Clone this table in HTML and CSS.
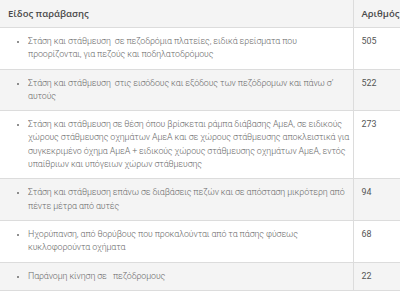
FILE: index.html
```html
<!DOCTYPE html>
<html lang="el">
<head>
<meta charset="utf-8">
<link rel="stylesheet" href="styles.css">
</head>
<body>
<table class="violations">
  <thead>
    <tr><th class="type">Είδος παράβασης</th><th class="num">Αριθμός</th></tr>
  </thead>
  <tbody>
    <tr><td class="type"><ul><li>Στάση και στάθμευση &nbsp;σε πεζοδρόμια πλατείες, ειδικά ερείσματα που προορίζονται, για πεζούς και ποδηλατοδρόμους</li></ul></td><td class="num">505</td></tr>
    <tr><td class="type"><ul><li>Στάση και στάθμευση &nbsp;στις εισόδους και εξόδους των πεζόδρομων και πάνω σ’ αυτούς</li></ul></td><td class="num">522</td></tr>
    <tr><td class="type"><ul><li>Στάση και στάθμευση σε θέση όπου βρίσκεται ράμπα διάβασης ΑμεΑ, σε ειδικούς χώρους στάθμευσης οχημάτων ΑμεΑ και σε χώρους στάθμευσης αποκλειστικά για συγκεκριμένο όχημα ΑμεΑ + ειδικούς χώρους στάθμευσης οχημάτων ΑμεΑ, εντός υπαίθριων και υπόγειων χώρων στάθμευσης</li></ul></td><td class="num">273</td></tr>
    <tr><td class="type"><ul><li>Στάση και στάθμευση επάνω σε διαβάσεις πεζών και σε απόσταση μικρότερη από πέντε μέτρα από αυτές</li></ul></td><td class="num">94</td></tr>
    <tr><td class="type"><ul><li>Ηχορύπανση, από θορύβους που προκαλούνται από τα πάσης φύσεως κυκλοφορούντα οχήματα</li></ul></td><td class="num">68</td></tr>
    <tr><td class="type"><ul><li>Παράνομη κίνηση σε &nbsp; πεζόδρομους</li></ul></td><td class="num">22</td></tr>
  </tbody>
</table>
</body>
</html>
```
FILE: styles.css
```css
html, body { margin: 0; padding: 0; background: #fff; }
body { font-family: Roboto, "Liberation Sans", sans-serif; font-size: 8.9px; color: #6b6b6b; }
.violations { width: 400px; border-collapse: collapse; table-layout: fixed; }
.violations th, .violations td { box-sizing: border-box; padding: 7px 8px; line-height: 13.3px; vertical-align: top; text-align: left; border-bottom: 1px solid #dcdcdc; }
.violations td { font-weight: 300; }
.violations td.type { letter-spacing: -0.12px; }
.violations th { background: #f4f4f4; color: #4a4a4a; font-size: 9.5px; line-height: 13px; font-family: "Open Sans", "Liberation Sans", sans-serif; font-weight: 600; }
.violations .type { width: 353px; padding-right: 2px; border-right: 1px solid #dcdcdc; }
.violations td.num { color: #555; font-weight: 400; }
.violations tbody tr:nth-child(even) td { background: #f4f4f4; }
.violations ul { margin: 0; padding-left: 20px; list-style: disc; }
.violations li::marker { font-size: 7px; }
```
